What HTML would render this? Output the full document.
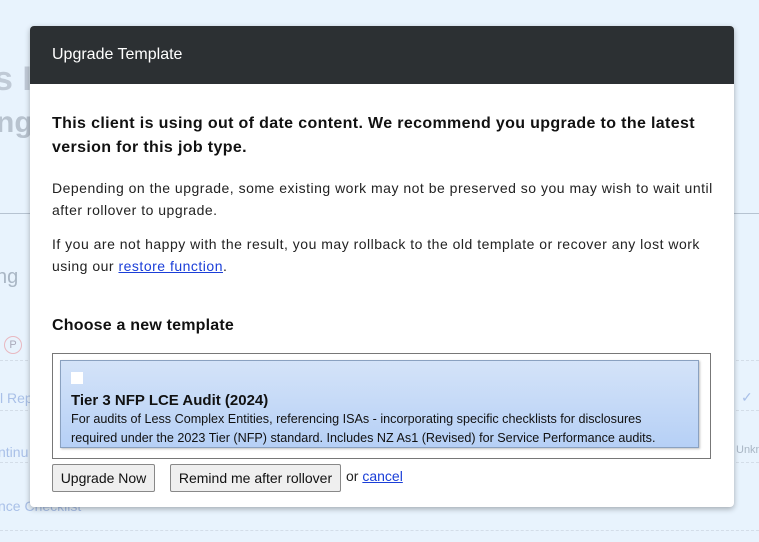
<!DOCTYPE html>
<html><head><style>
body{margin:0;width:759px;height:542px;background:#e8f3fd;font-family:"Liberation Sans",sans-serif;position:relative;overflow:hidden}
.bg{position:absolute;color:#a9b6c4}
.line{position:absolute;left:0;width:759px;border-top:1px dashed #d3dde8}
.modal{position:absolute;left:30px;top:26px;width:704px;height:481px;background:#fff;border-radius:4px;box-shadow:0 2px 6px rgba(0,0,0,.3);overflow:hidden}
.hd{height:58px;background:#2c3033;color:#fff;font-size:16px;line-height:58px;padding-left:22px}
.c{padding:0 22px}
h1{font-size:16px;font-weight:bold;line-height:24px;margin:28px 0 0;color:#111;letter-spacing:0.35px}
p{font-size:14px;line-height:22px;margin:0;color:#222;width:680px;letter-spacing:0.5px}
a{color:#1a3ed8}
h2{font-size:16px;font-weight:bold;margin:0;color:#111;letter-spacing:0.2px}
.box{position:absolute;left:22px;top:327px;width:657px;height:104px;border:1px solid #777}
.opt{position:absolute;left:7px;top:6px;width:637px;height:86px;border:1px solid #8aa1c0;background:linear-gradient(#d4e3f8,#b6d0f6);box-shadow:1px 1px 2px rgba(0,0,0,.25)}
.btn{position:absolute;top:438px;height:26px;border:1px solid #888;border-radius:2px;background:#efefef;font-size:14px;line-height:26px;text-align:center;color:#111}
</style></head><body>
<div class="bg" style="left:-6px;top:60px;font-size:34px;font-weight:bold;color:#c0cad6">s In</div>
<div class="bg" style="left:-4px;top:106px;font-size:30px;font-weight:bold;color:#b8c3cf">ng</div>
<div style="position:absolute;left:0;top:213px;width:759px;border-top:1px solid #b6c3d1"></div>
<div class="bg" style="left:-4px;top:266px;font-size:20px">ng</div>
<div style="position:absolute;left:4px;top:336px;width:16px;height:16px;border:1px solid #e8b8c0;border-radius:50%;font-size:11px;text-align:center;line-height:16px;color:#aab">P</div>
<div class="line" style="top:360px"></div>
<div class="bg" style="left:0;top:390px;font-size:14px;color:#a9c0e8">l Rep</div>
<div class="line" style="top:410px"></div>
<div class="bg" style="left:-2px;top:444px;font-size:14px;color:#a9c0e8">ntinu</div>
<div class="bg" style="left:736px;top:444px;font-size:11px">Unkn</div>
<div class="line" style="top:462px"></div>
<div class="bg" style="left:-2px;top:498px;font-size:14px;color:#a9c0e8">nce Checklist</div>
<div class="line" style="top:530px"></div>
<div class="bg" style="left:741px;top:389px;font-size:14px;color:#a9c0e8">✓</div>
<div class="modal">
<div class="hd">Upgrade Template</div>
<div class="c">
<h1>This client is using out of date content. We recommend you upgrade to the latest version for this job type.</h1>
<p style="margin-top:17px">Depending on the upgrade, some existing work may not be preserved so you may wish to wait until after rollover to upgrade.</p>
<p style="margin-top:12px">If you are not happy with the result, you may rollback to the old template or recover any lost work using our <a href="#">restore function</a>.</p>
<h2 style="margin-top:40px">Choose a new template</h2>
</div>
<div class="box"><div class="opt">
<div style="position:absolute;left:10px;top:11px;width:12px;height:12px;background:#fff"></div>
<div style="position:absolute;left:10px;top:31px;font-size:15px;font-weight:bold;color:#111">Tier 3 NFP LCE Audit (2024)</div>
<div style="position:absolute;left:10px;top:49px;font-size:12.6px;line-height:19px;color:#111;width:605px">For audits of Less Complex Entities, referencing ISAs - incorporating specific checklists for disclosures required under the 2023 Tier (NFP) standard. Includes NZ As1 (Revised) for Service Performance audits.</div>
</div></div>
<div class="btn" style="left:22px;width:101px">Upgrade Now</div>
<div class="btn" style="left:140px;width:169px">Remind me after rollover</div>
<div style="position:absolute;left:316px;top:442px;font-size:14px;color:#222">or <a href="#">cancel</a></div>
</div>
</body></html>
